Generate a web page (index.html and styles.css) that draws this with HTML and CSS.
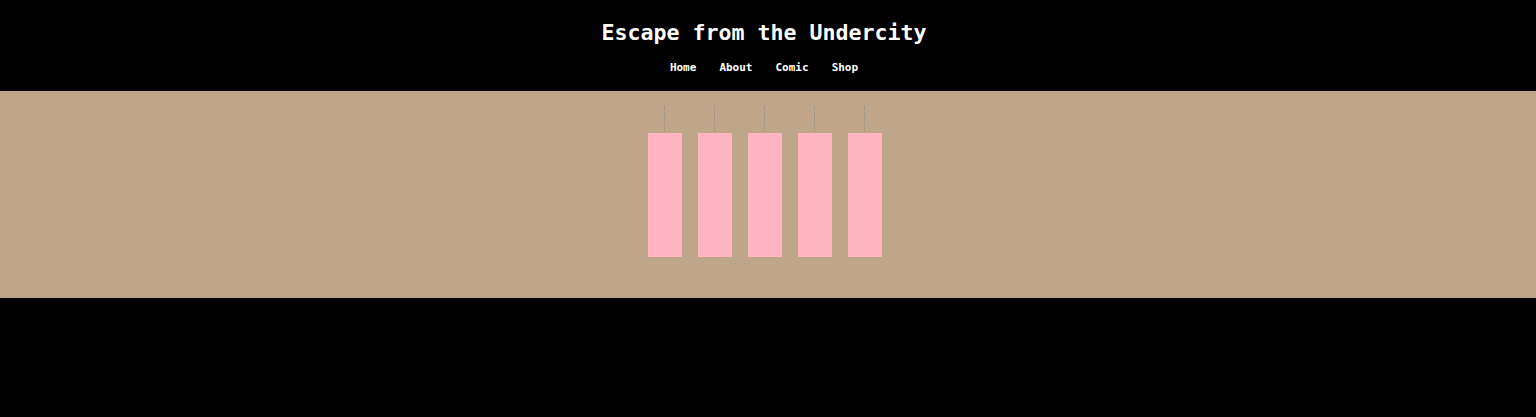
FILE: index.html
```html
<!DOCTYPE html>
<html lang="en">
<head>
<meta charset="utf-8">
<title>Escape from the Undercity</title>
<link rel="stylesheet" href="styles.css">
</head>
<body>
<header class="site-header">
  <h1 class="site-title">Escape from the Undercity</h1>
  <nav class="site-nav">
    <a class="nav-link" href="#">Home</a>
    <a class="nav-link" href="#">About</a>
    <a class="nav-link" href="#">Comic</a>
    <a class="nav-link" href="#">Shop</a>
  </nav>
</header>
<main class="stage">
  <div class="hangers">
    <div class="hanger"><span class="string"></span><span class="bar"></span></div>
    <div class="hanger"><span class="string"></span><span class="bar"></span></div>
    <div class="hanger"><span class="string"></span><span class="bar"></span></div>
    <div class="hanger"><span class="string"></span><span class="bar"></span></div>
    <div class="hanger"><span class="string"></span><span class="bar"></span></div>
  </div>
</main>
</body>
</html>
```
FILE: styles.css
```css
html, body {
  margin: 0;
  padding: 0;
  background: #000;
}
body {
  font-family: "DejaVu Sans Mono", "Liberation Mono", monospace;
  color: #fff;
}
.site-header {
  display: flex;
  flex-direction: column;
  align-items: center;
  padding: 20px 8px 17px 0;
}
.site-title {
  margin: 0;
  font-size: 21.6px;
  line-height: 26px;
  font-weight: bold;
}
.site-nav {
  display: flex;
  gap: 23px;
  margin-top: 15px;
  font-size: 11px;
  line-height: 13px;
  font-weight: bold;
}
.nav-link {
  color: #fff;
  text-decoration: none;
}
.stage {
  background: #c0a688;
  height: 207px;
  display: flex;
  justify-content: center;
  padding-right: 7px;
}
.hangers {
  display: flex;
  gap: 16px;
  padding-top: 15px;
}
.hanger {
  display: flex;
  flex-direction: column;
  align-items: center;
  width: 34px;
}
.string {
  width: 1px;
  height: 27px;
  background: repeating-linear-gradient(to bottom, #9d9588 0 2px, transparent 2px 3px);
}
.bar {
  width: 34px;
  height: 124px;
  background: #ffb6c1;
}
```
